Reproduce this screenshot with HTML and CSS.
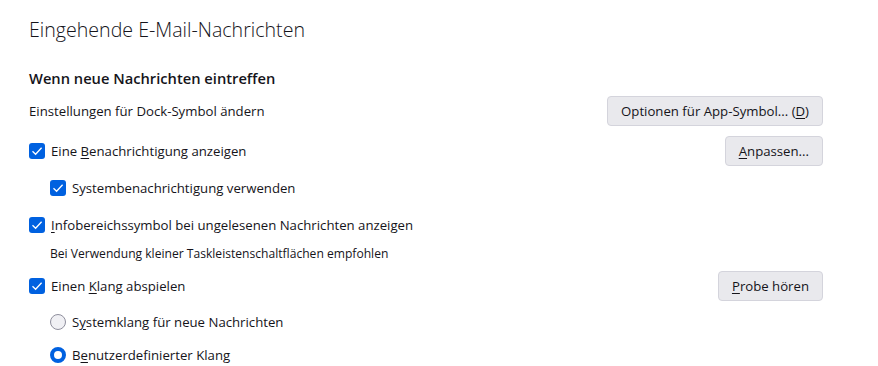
FILE: index.html
```html
<!DOCTYPE html>
<html lang="de">
<head>
  <meta charset="UTF-8" />
  <title>Eingehende E-Mail-Nachrichten</title>
  <link rel="stylesheet" href="styles.css">
</head>
<body>
  <div class="pane">
    <h1>Eingehende E-Mail-Nachrichten</h1>
    <h2>Wenn neue Nachrichten eintreffen</h2>

    <div class="row row-dock">
      <span class="label">Einstellungen für Dock-Symbol ändern</span>
      <button class="btn">Optionen für App-Symbol... (<u>D</u>)</button>
    </div>

    <div class="row row-alert">
      <span class="check"><svg viewBox="0 0 16 16"><path d="M3.5 8.2 L6.6 11.2 L12.6 4.8" /></svg></span>
      <span class="label">Eine <u>B</u>enachrichtigung anzeigen</span>
      <button class="btn"><u>A</u>npassen...</button>
    </div>

    <div class="row sub">
      <span class="check"><svg viewBox="0 0 16 16"><path d="M3.5 8.2 L6.6 11.2 L12.6 4.8" /></svg></span>
      <span class="label">Systembenachrichtigung verwenden</span>
    </div>

    <div class="row">
      <span class="check"><svg viewBox="0 0 16 16"><path d="M3.5 8.2 L6.6 11.2 L12.6 4.8" /></svg></span>
      <span class="label"><u>I</u>nfobereichssymbol bei ungelesenen Nachrichten anzeigen</span>
    </div>

    <div class="note">Bei Verwendung kleiner Taskleistenschaltflächen empfohlen</div>

    <div class="row">
      <span class="check"><svg viewBox="0 0 16 16"><path d="M3.5 8.2 L6.6 11.2 L12.6 4.8" /></svg></span>
      <span class="label">Einen <u>K</u>lang abspielen</span>
      <button class="btn"><u>P</u>robe hören</button>
    </div>

    <div class="row sub radio-row">
      <span class="radio"></span>
      <span class="label">S<u>y</u>stemklang für neue Nachrichten</span>
    </div>

    <div class="row sub radio-row last">
      <span class="radio on"></span>
      <span class="label">B<u>e</u>nutzerdefinierter Klang</span>
    </div>
  </div>
</body>
</html>
```

FILE: styles.css
```css
:root {
  --text: #15141a;
  --accent: #0061e0;
  --btn-bg: #e9e9ed;
  --btn-border: #d4d4dc;
}

body {
  margin: 0;
  background: #fff;
  color: var(--text);
  font-family: "Open Sans", "Noto Sans", sans-serif;
  font-size: 13.2px;
}

.pane {
  width: 794px;
  padding: 14px 0 0 29px;
}

h1 {
  margin: 0;
  font-size: 19.6px;
  font-weight: 300;
  line-height: 32px;
}

h2 {
  margin: 21px 0 0;
  font-size: 14.7px;
  font-weight: 600;
  line-height: 22px;
}

.row {
  display: flex;
  align-items: center;
  min-height: 30px;
  margin-top: 7px;
}

.row-dock {
  margin-top: 7px;
}

.row-alert {
  margin-top: 10px;
}

.sub {
  padding-left: 21px;
}

.label {
  flex: 1;
}

u {
  text-underline-offset: 2px;
}

.check {
  width: 16px;
  height: 16px;
  margin-right: 6px;
  border-radius: 3px;
  background: var(--accent);
  display: flex;
}

.check svg {
  width: 16px;
  height: 16px;
  fill: none;
  stroke: #fff;
  stroke-width: 1.3;
}

.radio {
  width: 14px;
  height: 14px;
  margin-right: 6px;
  border-radius: 50%;
  border: 1px solid #8f8f9d;
  background: #f0f0f4;
}

.radio.on {
  width: 8px;
  height: 8px;
  border: 4px solid var(--accent);
  background: #fff;
}

.radio-row {
  margin-top: 6px;
}

.radio-row.last {
  margin-top: 3px;
}

.note {
  padding-left: 21px;
  margin-top: 4px;
  font-size: 12.1px;
  line-height: 20px;
}

.btn {
  height: 30px;
  padding: 0 13px;
  border: 1px solid var(--btn-border);
  border-radius: 4px;
  background: var(--btn-bg);
  color: var(--text);
  font-family: inherit;
  font-size: 13.2px;
}
```
